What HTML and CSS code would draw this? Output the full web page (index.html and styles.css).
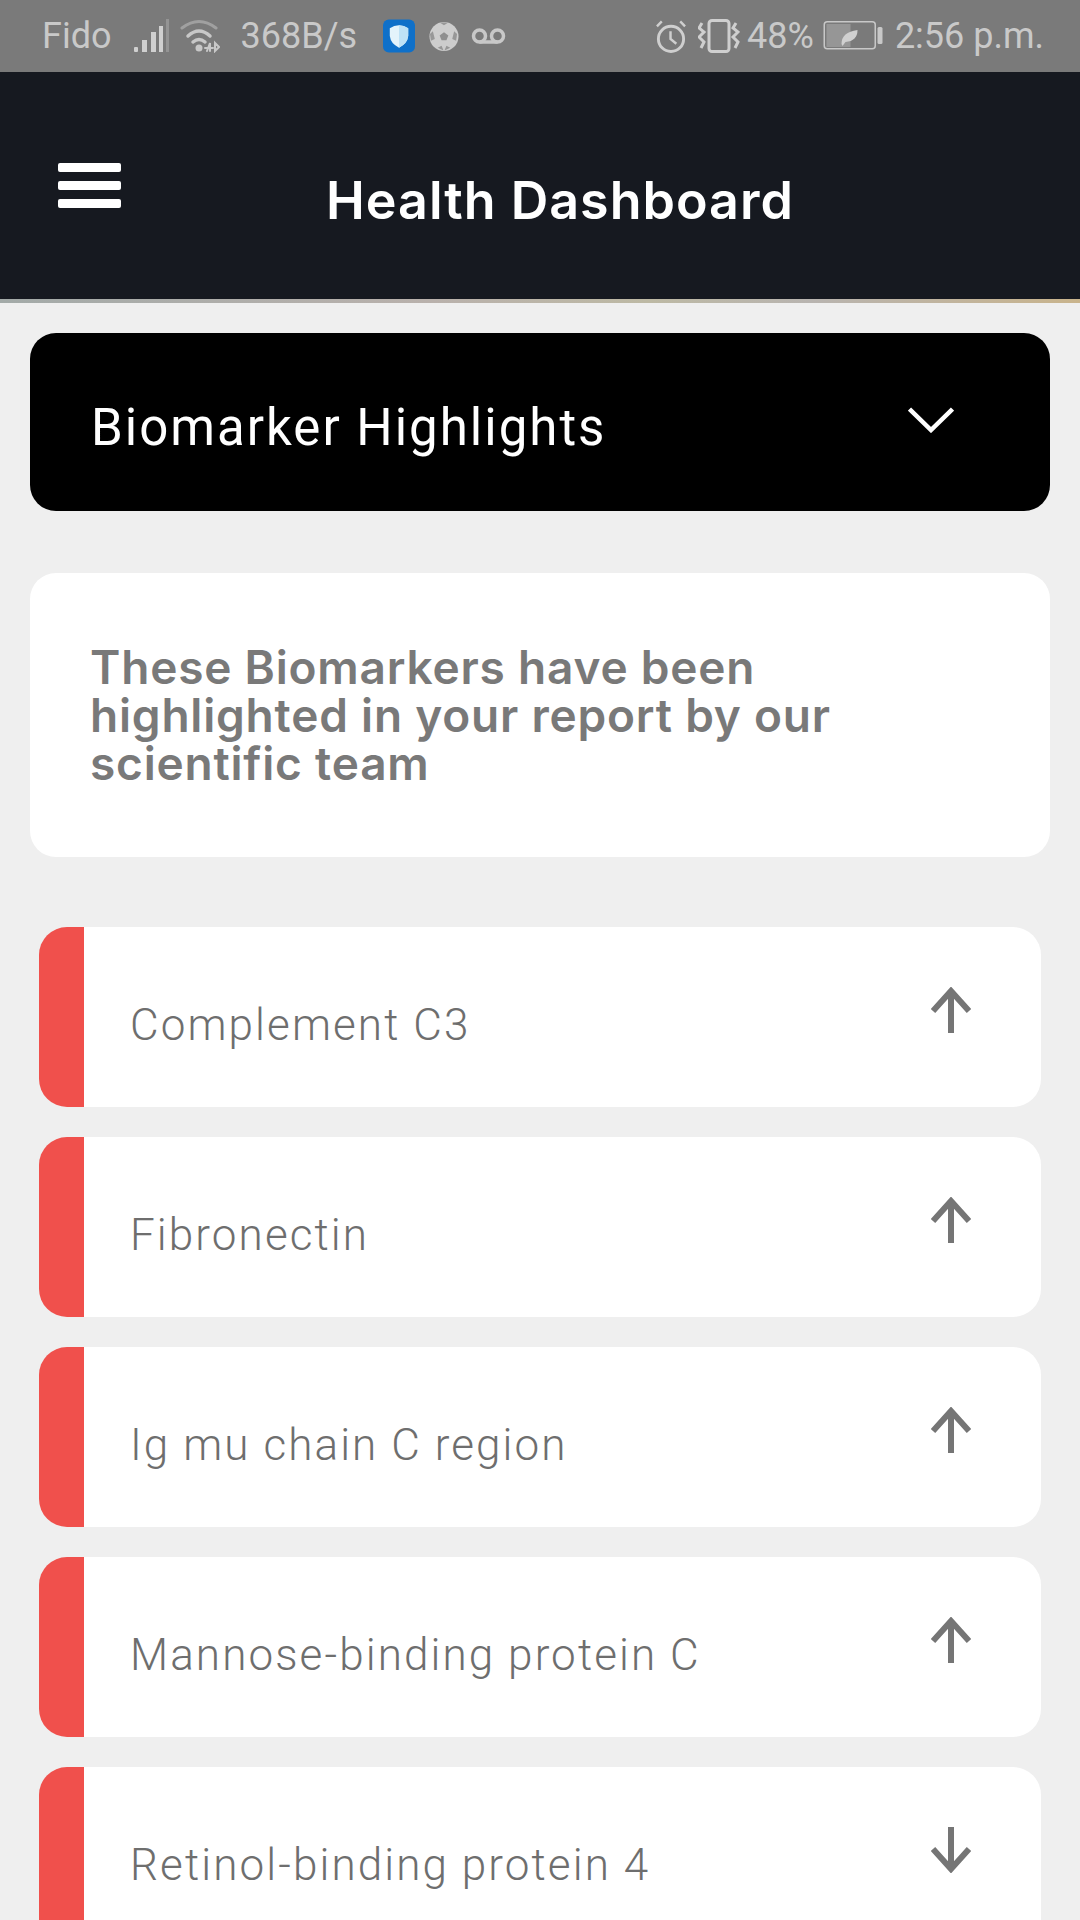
FILE: index.html
```html
<!DOCTYPE html>
<html lang="en">
<head>
    <meta charset="UTF-8">
    <meta name="viewport" content="width=device-width, initial-scale=1.0">
    <title>Health Dashboard</title>
    <link rel="stylesheet" href="styles.css">
</head>
<body>
    <div class="status-bar">
        <div class="status-left">
            <span class="carrier">Fido</span>
            <svg class="ic-signal" width="35" height="34" viewBox="0 0 35 34">
                <rect x="0" y="28" width="4" height="5" rx="1" fill="#d0d0d0"/>
                <rect x="8" y="21" width="5" height="12" fill="#d0d0d0"/>
                <rect x="17" y="13" width="5" height="20" fill="#d0d0d0"/>
                <rect x="25" y="7" width="4" height="26" fill="#d0d0d0"/>
                <rect x="32" y="0" width="3" height="33" fill="#949494"/>
            </svg>
            <svg class="ic-wifi" width="40" height="34" viewBox="0 0 40 34" fill="none" stroke="#c8c8c8" stroke-linecap="round">
                <path d="M2 9 Q19 -4 36 9" stroke-width="3" stroke="#a0a0a0"/>
                <path d="M8 17 Q19 7 30 17" stroke-width="3.5"/>
                <path d="M13 23 Q19 18 25 23" stroke-width="3.5"/>
                <circle cx="19" cy="29" r="3.500" fill="#c8c8c8" stroke="none"/>
                <path d="M27 32 L30 24 V32 M25 29 H33 M35 24 V32 L39 28 Z" stroke-width="2"/>
            </svg>
            <span class="speed">368B/s</span>
            <svg class="ic-shield" width="32" height="34" viewBox="0 0 33 34">
                <rect width="33" height="34" rx="6" fill="#0f70c9"/>
                <path d="M7 9 Q16 3 26 9 V17 Q25 25 16.500 29 Q8 25 7 17 Z" fill="#e4f3fb"/>
                <path d="M16.500 6 Q22 6 26 9 V17 Q25 25 16.500 29 Z" fill="#bfe2f6"/>
            </svg>
            <svg class="ic-ball" width="30" height="31" viewBox="0 0 31 31">
                <circle cx="15.500" cy="15.500" r="15" fill="#cdcdcd"/>
                <path d="M15.500 11 L20 14.500 L18 19.500 H13 L11 14.500 Z" fill="#8f8f8f"/>
                <path d="M11 1 L15.500 4 L20 1 Z M1 13 L4 10 L6 18 L2 20 Z M29 13 L26 10 L24 18 L28 20 Z M9 27 L13 25 L15 30 Z M22 27 L18 25 L16 30 Z" fill="#979797"/>
            </svg>
            <svg class="ic-voicemail" width="35" height="18" viewBox="0 0 34 18" fill="none" stroke="#c8c8c8" stroke-width="3.500">
                <circle cx="8" cy="9" r="6"/>
                <circle cx="26" cy="9" r="6"/>
                <path d="M8 15 H26"/>
            </svg>
        </div>
        <div class="status-right">
            <svg class="ic-alarm" width="32" height="35" viewBox="0 0 33 35" fill="none" stroke="#cfcfcf" stroke-width="3">
                <circle cx="16.500" cy="20" r="13"/>
                <path d="M16 12 V20 L22 25" stroke-width="2.500"/>
                <path d="M2 7 L7 2 M31 7 L26 2" stroke-width="2.500"/>
            </svg>
            <svg class="ic-vibrate" width="42" height="34" viewBox="0 0 42 34" fill="none" stroke="#cfcfcf" stroke-width="3">
                <rect x="11" y="1.500" width="20" height="31" rx="3"/>
                <path d="M4 4 L1 9 L6 13 L1 18 L6 23 L3 29"/>
                <path d="M38 4 L35 9 L40 13 L35 18 L40 23 L37 29"/>
            </svg>
            <span class="battery-pct">48%</span>
            <svg class="ic-battery" width="60" height="30" viewBox="0 0 59 30">
                <rect x="0.750" y="0.750" width="51" height="27" rx="3" fill="none" stroke="#c8c8c8" stroke-width="1.500"/>
                <rect x="3" y="3" width="24" height="23" fill="#969696"/>
                <path d="M18 23 Q18 11 34 9 Q34 20 22 21 L19 25 Z" fill="#d0d0d0"/>
                <rect x="54" y="6" width="5" height="17" rx="1.500" fill="#c8c8c8"/>
            </svg>
            <span class="clock">2:56 p.m.</span>
        </div>
    </div>

    <header class="app-header">
        <button class="menu-btn" aria-label="Menu">
            <span></span><span></span><span></span>
        </button>
        <h1>Health Dashboard</h1>
    </header>

    <main class="content">
        <div class="panel-head">
            <span>Biomarker Highlights</span>
            <svg class="chevron" width="46" height="26" viewBox="0 0 46 26" fill="none" stroke="#fff" stroke-width="4.500">
                <path d="M1.500 2 L23 23 L44.500 2"/>
            </svg>
        </div>

        <div class="intro">
            <p>These Biomarkers have been highlighted in your report by our scientific team</p>
        </div>

        <ul class="marker-list">
            <li class="marker">
                <span class="marker-name">Complement C3</span>
                <svg class="arrow" width="40" height="46" viewBox="0 0 40 46" fill="none" stroke="#757575" stroke-width="6"><path d="M20 46 V3 M2 24 L20 4 L38 24"/></svg>
            </li>
            <li class="marker">
                <span class="marker-name">Fibronectin</span>
                <svg class="arrow" width="40" height="46" viewBox="0 0 40 46" fill="none" stroke="#757575" stroke-width="6"><path d="M20 46 V3 M2 24 L20 4 L38 24"/></svg>
            </li>
            <li class="marker">
                <span class="marker-name">Ig mu chain C region</span>
                <svg class="arrow" width="40" height="46" viewBox="0 0 40 46" fill="none" stroke="#757575" stroke-width="6"><path d="M20 46 V3 M2 24 L20 4 L38 24"/></svg>
            </li>
            <li class="marker">
                <span class="marker-name">Mannose-binding protein C</span>
                <svg class="arrow" width="40" height="46" viewBox="0 0 40 46" fill="none" stroke="#757575" stroke-width="6"><path d="M20 46 V3 M2 24 L20 4 L38 24"/></svg>
            </li>
            <li class="marker">
                <span class="marker-name">Retinol-binding protein 4</span>
                <svg class="arrow" width="40" height="46" viewBox="0 0 40 46" fill="none" stroke="#757575" stroke-width="6"><path d="M20 0 V43 M2 22 L20 42 L38 22"/></svg>
            </li>
        </ul>
    </main>
</body>
</html>
```

FILE: styles.css
```css
html, body {
    margin: 0;
    padding: 0;
    height: 1920px;
    overflow: hidden;
}
body {
    font-family: Roboto, sans-serif;
    background-color: #efefef;
}
.status-bar {
    height: 72px;
    box-sizing: border-box;
    padding: 0 36px 0 42px;
    background-color: #7a7a7a;
    color: #c9c9c9;
    font-size: 36px;
    display: flex;
    justify-content: space-between;
    align-items: center;
}
.status-left, .status-right {
    display: flex;
    align-items: center;
}
.ic-signal { margin-left: 22px; }
.ic-wifi { margin-left: 11px; }
.speed { margin-left: 21px; }
.ic-shield { margin-left: 26px; }
.ic-ball { margin-left: 14px; }
.ic-voicemail { margin-left: 12px; }
.ic-vibrate { margin-left: 11px; }
.battery-pct { margin-left: 7px; }
.ic-battery { margin-left: 9px; }
.clock { margin-left: 12px; }

.app-header {
    height: 231px;
    box-sizing: border-box;
    background-color: #161920;
    border-bottom: 4px solid;
    border-image: linear-gradient(90deg, #a3aaa8, #b9b1ac 40%, #bdb9a4 60%, #b8b4b0 75%, #c9b48c) 1;
    display: flex;
    align-items: center;
}
.menu-btn {
    width: 63px;
    margin-left: 58px;
    padding: 0;
    border: none;
    background: none;
    display: flex;
    flex-direction: column;
    gap: 9px;
}
.menu-btn span {
    height: 9px;
    background-color: #fff;
    border-radius: 2px;
}
.app-header h1 {
    margin: 29px 0 0 205px;
    color: #fff;
    font-family: Inter, sans-serif;
    font-size: 52px;
    font-weight: 600;
    letter-spacing: 1px;
}
.content {
    padding: 30px 30px 0;
}
.panel-head {
    height: 178px;
    box-sizing: border-box;
    padding: 10px 96px 0 61px;
    background-color: #000;
    border-radius: 26px;
    color: #fff;
    font-size: 51px;
    letter-spacing: 2px;
    display: flex;
    justify-content: space-between;
    align-items: center;
}
.chevron {
    margin-bottom: 14px;
}
.intro {
    margin-top: 62px;
    height: 284px;
    box-sizing: border-box;
    padding: 70px 60px 0;
    background: #fff;
    border-radius: 26px;
}
.intro p {
    margin: 0;
    max-width: 840px;
    color: #797979;
    font-family: Inter, sans-serif;
    font-size: 46px;
    font-weight: 600;
    line-height: 48px;
    letter-spacing: 0.8px;
}
.marker-list {
    list-style: none;
    margin: 70px 9px 0;
    padding: 0;
    display: flex;
    flex-direction: column;
    gap: 30px;
}
.marker {
    height: 180px;
    flex-shrink: 0;
    box-sizing: border-box;
    padding: 0 70px 0 46px;
    background: #fff;
    border-left: 45px solid #f0504c;
    border-radius: 28px;
    display: flex;
    justify-content: space-between;
    align-items: center;
}
.marker-name {
    margin-top: 16px;
    color: #6e6e6e;
    font-size: 44px;
    font-weight: 300;
    letter-spacing: 2.1px;
}
.arrow {
    margin-bottom: 14px;
}
```
